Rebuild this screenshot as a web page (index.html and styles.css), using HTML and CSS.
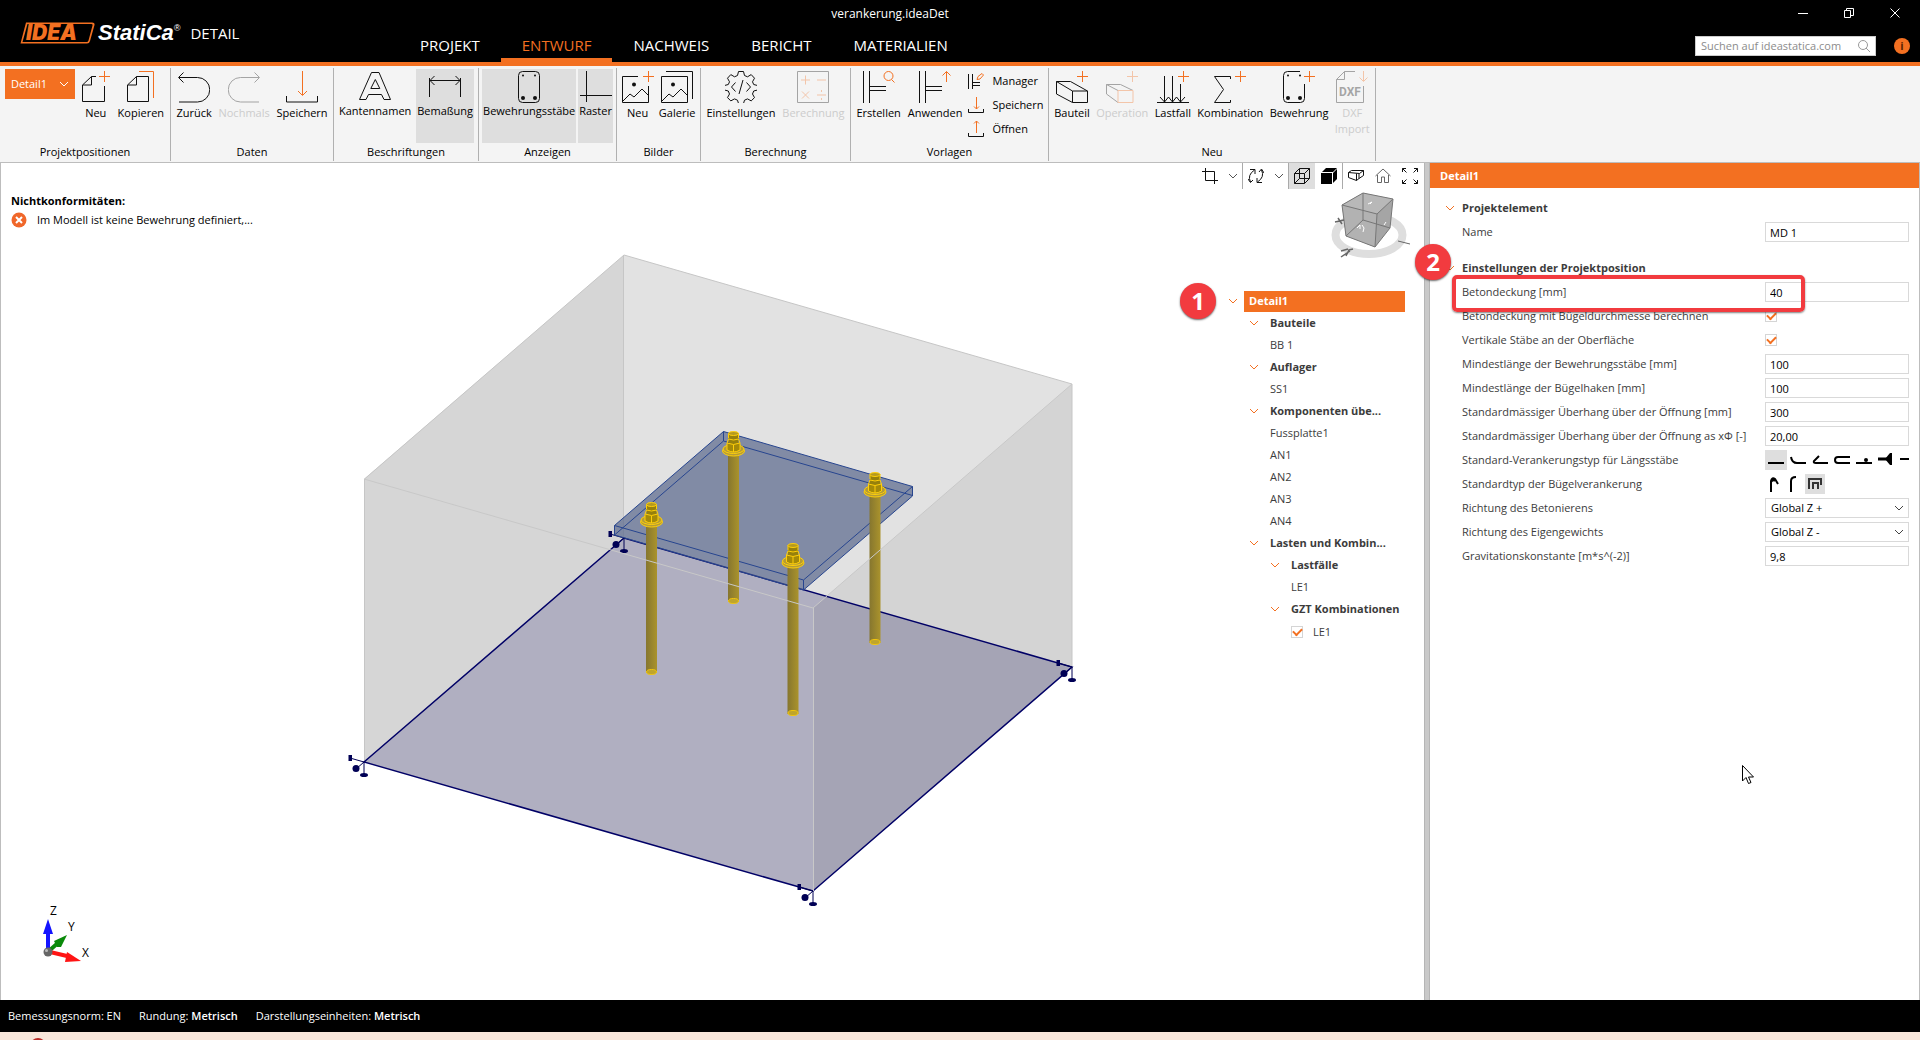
FILE: index.html
```html
<!DOCTYPE html>
<html lang="de">

<head>
    <meta charset="UTF-8" />
    <meta name="viewport" content="width=device-width, initial-scale=1.0" />
    <title>verankerung.ideaDet</title>
    <link rel="stylesheet" href="styles.css">
</head>

<body>

    <!-- shared shapes -->
    <svg class="defs" width="0" height="0" aria-hidden="true">
        <symbol id="chevron" viewBox="0 0 10 6">
            <path d="M1 1l4 4 4-4" fill="none" stroke="currentColor" />
        </symbol>
        <symbol id="plus" viewBox="0 0 11 11">
            <path d="M0 5.5h11M5.5 0v11" fill="none" stroke="#f37021" />
        </symbol>
    </svg>

    <header class="header">
        <div class="titlebar">
            <div class="title">verankerung.ideaDet</div>
            <div class="window-buttons">
                <button type="button" aria-label="Minimieren"><svg width="10" height="10"><path d="M0 5.5h10" /></svg></button>
                <button type="button" aria-label="Wiederherstellen"><svg width="10" height="10"><path d="M.5 2.5h6v7h-6zM2.5 2V.5h7v7H7" /></svg></button>
                <button type="button" aria-label="Schließen"><svg width="10" height="10"><path d="M.5.5l9 9M9.5.5l-9 9" /></svg></button>
            </div>
        </div>

        <div class="brand">
            <svg class="logo" width="75" height="22" viewBox="0 0 75 22" aria-label="IDEA">
                <path d="M6 .5h66q3 0 2.500 2.500L70 19q-.6 2.500-3 2.500H.5z" fill="#f37021" />
                <path d="M7.500 2h64q1.500 0 1 1.500L68.500 18.500q-.5 1.500-2 1.500H2.500z" fill="#000" />
                <text x="6" y="18" class="logo-text">IDEA</text>
            </svg>
            <span class="statica">StatiCa<sup>®</sup></span>
            <span class="product">DETAIL</span>
        </div>

        <nav class="tabs">
            <a href="#projekt">PROJEKT</a>
            <a href="#entwurf" class="active">ENTWURF</a>
            <a href="#nachweis">NACHWEIS</a>
            <a href="#bericht">BERICHT</a>
            <a href="#materialien">MATERIALIEN</a>
        </nav>

        <div class="search-area">
            <label class="search">
                <input type="search" placeholder="Suchen auf ideastatica.com" aria-label="Suchen auf ideastatica.com">
                <svg width="12" height="12" viewBox="0 0 12 12"><circle cx="5" cy="5" r="4.500" /><path d="M8 8l4 4" /></svg>
            </label>
            <button type="button" class="info" aria-label="Info">i</button>
        </div>
    </header>

    <section class="ribbon">
        <div class="group">
            <div class="tools">
                <button type="button" class="dropdown">Detail1 <svg width="10" height="6"><use href="#chevron" /></svg></button>
                <button type="button" class="tool">
                    <svg width="28" height="32"><path d="M14 5.500H9.500l-9 8.500v16.500h22V15M9.500 5.500v8.500h-9" /><use href="#plus" x="17" y="0" width="11" height="11" /></svg>
                    Neu
                </button>
                <button type="button" class="tool">
                    <svg width="28" height="32"><path d="M9.500 5.500h12v25H.5V14zM9.500 5.500v8.500h-9" /><path class="accent" d="M12 .5h14.500V27" /></svg>
                    Kopieren
                </button>
            </div>
            <div class="group-name">Projektpositionen</div>
        </div>

        <div class="group">
            <div class="tools">
                <button type="button" class="tool">
                    <svg width="32" height="32"><path d="M1 6.500h18.500a12 12 0 0 1 0 24.500H1M5.500 1.500l-5 5 5 5" /></svg>
                    Zurück
                </button>
                <button type="button" class="tool" disabled>
                    <svg width="32" height="32"><path d="M31 6.500H12.500a12 12 0 0 0 0 24.500H31M26.500 1.500l5 5-5 5" /></svg>
                    Nochmals
                </button>
                <button type="button" class="tool">
                    <svg width="32" height="32"><path class="accent" d="M16.500 0v24M12 20l4.500 4.500L21 20" /><path d="M.5 25v6h31v-6" /></svg>
                    Speichern
                </button>
            </div>
            <div class="group-name">Daten</div>
        </div>

        <div class="group">
            <div class="tools">
                <button type="button" class="tool toggle" aria-pressed="false">
                    <svg width="32" height="32"><path d="M12.500 1.500h7.500l11.500 27h-6.500l-2.500-5h-13l-2.500 5H.5zM16.300 8.500l-4.500 9h9z" /></svg>
                    Kantennamen
                </button>
                <button type="button" class="tool toggle pressed" aria-pressed="true">
                    <svg width="32" height="32"><path d="M.5 7v19M31.500 7v19M1 9.500h30M5.500 5l-4.500 4.500 4.500 4.500M26.500 5l4.500 4.500-4.500 4.500" /></svg>
                    Bemaßung
                </button>
            </div>
            <div class="group-name">Beschriftungen</div>
        </div>

        <div class="group">
            <div class="tools">
                <button type="button" class="tool toggle pressed" aria-pressed="true">
                    <svg width="22" height="32"><rect x=".5" y=".5" width="21" height="31" rx="4" /><g class="dots"><circle cx="5" cy="4.500" r="1" /><circle cx="17" cy="4.500" r="1" /><circle cx="5" cy="27" r="2" /><circle cx="17" cy="27" r="2" /></g></svg>
                    Bewehrungsstäbe
                </button>
                <button type="button" class="tool toggle pressed" aria-pressed="true">
                    <svg width="32" height="32"><path d="M6.500 0v31M0 24.500h32" /></svg>
                    Raster
                </button>
            </div>
            <div class="group-name">Anzeigen</div>
        </div>

        <div class="group">
            <div class="tools">
                <button type="button" class="tool">
                    <svg width="32" height="32"><path d="M16 5.500H.5v26h26V15M1 30l7-7 4 3 8-8 6 6" /><circle class="dot" cx="12" cy="13.500" r="2" /><use href="#plus" x="21" y="0" width="11" height="11" /></svg>
                    Neu
                </button>
                <button type="button" class="tool">
                    <svg width="32" height="32"><path d="M.5 5.500h26v26H.5zM1 30l7-7 4 3 8-8 6 6M5 .5h26.500V28" /><circle class="dot" cx="12" cy="13.500" r="2" /></svg>
                    Galerie
                </button>
            </div>
            <div class="group-name">Bilder</div>
        </div>

        <div class="group">
            <div class="tools">
                <button type="button" class="tool">
                    <svg width="32" height="32"><path d="M13.500.5h5l1 4 3 1.300 3.700-2.200 3.300 3.600-2 3.600 1.200 2.700 3.800 1v4.500l-3.800 1-1.200 3 2 3.600-3.300 3.300-3.700-2-3 1.300-1 3.300h-5l-1-3.300-3-1.300-3.700 2-3.300-3.300 2-3.600-1.200-3-3.800-1V14.500l3.800-1 1.200-2.700-2-3.600 3.300-3.600 3.700 2.200 3-1.300z" /><path d="M10.500 11.500L6.500 16l4 4.500M21.500 11.500l4 4.500-4 4.500M18 9l-4 14" /></svg>
                    Einstellungen
                </button>
                <button type="button" class="tool" disabled>
                    <svg width="32" height="32"><path d="M.5.500h31v31H.5z" /><path class="accent" d="M4 9h9M8.500 4.500v9M20 9h9M5 20.500l7 7M12 20.500l-7 7M20 24h9M24.500 19v2M24.500 27v2" /></svg>
                    Berechnung
                </button>
            </div>
            <div class="group-name">Berechnung</div>
        </div>

        <div class="group">
            <div class="tools">
                <button type="button" class="tool">
                    <svg width="32" height="32"><path d="M.5 0v32M6.500 0v32M7 15.500h16M7 19.500h16" /><circle class="accent" cx="25.500" cy="5" r="4.500" /><path class="accent" d="M28.500 8.500l3 3" /></svg>
                    Erstellen
                </button>
                <button type="button" class="tool">
                    <svg width="32" height="32"><path d="M.5 0v32M6.500 0v32M7 15.500h16M7 19.500h16" /><path class="accent" d="M27.500 11V.5M23.500 4.500l4-4 4 4" /></svg>
                    Anwenden
                </button>
                <div class="stack">
                    <button type="button"><svg width="16" height="16"><path d="M.5 1v15M4.500 1v15M5 9.500h7M5 12.500h7" /><path class="accent" d="M9 6.500l1-3 4-3 1.500 1.500-3.500 4z" /></svg> Manager</button>
                    <button type="button"><svg width="16" height="16"><path class="accent" d="M8.500 0v12M6 9.500L8.500 12 11 9.500" /><path d="M.5 12v3.500h15V12" /></svg> Speichern</button>
                    <button type="button"><svg width="16" height="16"><path class="accent" d="M8.500 12V0M6 2.500L8.500 0 11 2.500" /><path d="M.5 12v3.500h15V12" /></svg> Öffnen</button>
                </div>
            </div>
            <div class="group-name">Vorlagen</div>
        </div>

        <div class="group">
            <div class="tools">
                <button type="button" class="tool">
                    <svg width="32" height="32"><path d="M.5 10.500h14l17 9.500v11.500h-15L.5 23zM.5 10.500l16 9.500v11.500M16.500 20h15" /><use href="#plus" x="21" y="0" width="11" height="11" /></svg>
                    Bauteil
                </button>
                <button type="button" class="tool" disabled>
                    <svg width="32" height="32"><path d="M.5 13.500h14l12.500 6M.5 13.500l11.500 6M.5 13.500V23l11.500 8.500" /><path class="accent" d="M12 19.500h15v12H12z" /><use href="#plus" x="21" y="0" width="11" height="11" /></svg>
                    Operation
                </button>
                <button type="button" class="tool">
                    <svg width="32" height="32"><path d="M0 31.500h32M7.500 5v26M15.500 5v26M23.500 13v18M3 26l4.500 5 4-5 4 5 4-5 4 5 4.500-5" /><use href="#plus" x="21" y="0" width="11" height="11" /></svg>
                    Lastfall
                </button>
                <button type="button" class="tool">
                    <svg width="32" height="32"><path d="M16.500 8V5.500h-16l9 13-9 13h16V29" /><use href="#plus" x="21" y="0" width="11" height="11" /></svg>
                    Kombination
                </button>
                <button type="button" class="tool">
                    <svg width="32" height="32"><path d="M17 .5H4.500q-4 0-4 4v23q0 4 4 4h13q4 0 4-4V13" /><g class="dots"><circle cx="5" cy="4.500" r="1" /><circle cx="17" cy="4.500" r="1" /><circle cx="5" cy="27" r="2" /><circle cx="17" cy="27" r="2" /></g><use href="#plus" x="21" y="0" width="11" height="11" /></svg>
                    Bewehrung
                </button>
                <button type="button" class="tool" disabled>
                    <svg width="32" height="32"><path d="M19 .5H8.500l-8 8v23H27.500V15M8.500.5v8h-8" /><path class="accent" d="M27.500 0v10M23.500 6.500l4 4 4-4" /><text x="3" y="25" class="dxf">DXF</text></svg>
                    <span>DXF<br>Import</span>
                </button>
            </div>
            <div class="group-name">Neu</div>
        </div>
    </section>

    <main class="workspace">
        <section class="viewport">
            <!-- 3D model -->
            <svg class="scene" viewBox="1 163 1423 837" preserveAspectRatio="xMinYMin meet" aria-label="3D-Modell">
                <defs>
                    <linearGradient id="rod"><stop offset="0" stop-color="#86762f" /><stop offset="1" stop-color="#aa932c" /></linearGradient>
                    <g id="bolt">
                        <rect x="-5.500" y="24" width="11" height="147" fill="url(#rod)" />
                        <ellipse cx="0" cy="170" rx="5" ry="2.500" fill="#bfa52c" stroke="#f3c60c" />
                        <ellipse cx="0" cy="20" rx="11" ry="5" fill="#b59c35" stroke="#ffcf0a" />
                        <ellipse cx="0" cy="18" rx="10.500" ry="4.500" fill="#b59c35" stroke="#ffcf0a" />
                        <path d="M-6.500 12v7q6.500 4 13 0v-7" fill="#a58a08" stroke="#ffcf0a" />
                        <path d="M-5 2v11h10V2z" fill="#96800c" stroke="none" />
                        <path d="M-5 2v5M5 2v5M-6.500 12l1.500-4q5 2 10 0l1.500 4q-6.500 3-13 0M0 14v7" fill="none" stroke="#ffcf0a" />
                        <ellipse cx="0" cy="2.500" rx="5" ry="2" fill="#b59a20" stroke="#ffcf0a" />
                    </g>
                    <g id="support" stroke="#000055" fill="#000055">
                        <path d="M0 0l-14-4M0 0l-8 7M0 0v13" fill="none" />
                        <rect x="-15.500" y="-7" width="3.500" height="6" stroke="none" />
                        <circle cx="-8" cy="6.500" r="3.500" stroke="none" />
                        <ellipse cx="0" cy="13" rx="4" ry="2" stroke="none" />
                    </g>
                </defs>
                <path d="M364 479L624 255v283L364 762z" fill="#d6d6d6" />
                <path d="M624 255l448 129v283L624 538z" fill="#e2e2e2" />
                <path d="M364 762L624 538l448 129L813 891z" fill="#b0afc1" />
                <path d="M813 608l259-224v283L813 891z" fill="#000" fill-opacity=".06" />
                <g fill="none" stroke="#c6c6c6">
                    <path d="M364.500 762V479L624 255l448 129v283M623.500 255v283" />
                </g>
                <path d="M364 762L624 538l448 129L813 891z" fill="none" stroke="#000066" stroke-width="1.500" />
                <use href="#support" x="624" y="538" />
                <g fill="#59668c" fill-opacity=".7" stroke="#27458f">
                    <path d="M614.500 525.500l109-94 189 55v9.500L803.500 590l-189-55z" />
                    <path d="M614.500 525.500l189 54.500 109-93.500M803.500 580v10M614.500 535l109-94 189 54.500M723.500 431.500v9.500" fill="none" />
                </g>
                <use href="#bolt" x="733.500" y="431" />
                <use href="#bolt" x="875" y="472" />
                <use href="#bolt" x="651.500" y="502" />
                <use href="#bolt" x="793" y="543" />
                <path d="M364 479l449 129 259-224M813.500 608v283" fill="none" stroke="#c8c8c8" />
                <use href="#support" x="364" y="762" />
                <use href="#support" x="813" y="891" />
                <use href="#support" x="1072" y="667" />
                <!-- axes -->
                <path d="M48 952v-20" stroke="#1414ff" stroke-width="4" />
                <path d="M43 934l5-15 5 15z" fill="#1414ff" />
                <path d="M50 950l9-8" stroke="#0a8a0a" stroke-width="4" />
                <path d="M54 941l13-6-6 12-4 0z" fill="#0a8a0a" />
                <path d="M50 952l17 4" stroke="#ff1414" stroke-width="4" />
                <path d="M67 952l14 9-16 1z" fill="#ff1414" />
                <circle cx="48" cy="952" r="4.500" fill="#666" />
                <circle cx="46.500" cy="950.500" r="1.500" fill="#bbb" />
                <g class="axis-name"><text x="50" y="915">Z</text><text x="68" y="931">Y</text><text x="82" y="957">X</text></g>
            </svg>

            <div class="messages">
                <b>Nichtkonformitäten:</b>
                <div class="message">
                    <svg width="16" height="16"><circle cx="8" cy="8" r="7.500" fill="#f0672a" /><path d="M5 5l6 6M11 5l-6 6" stroke="#fff" stroke-width="2" /></svg>
                    Im Modell ist keine Bewehrung definiert,...
                </div>
            </div>

            <div class="side">
                <div class="view-tools">
                    <button type="button" aria-label="Ausschnitt"><svg width="16" height="16"><path d="M3.500 0v12.500H16M0 3.500h12.500V16" /></svg></button>
                    <button type="button" class="more" aria-label="Mehr"><svg width="10" height="6"><use href="#chevron" /></svg></button>
                    <button type="button" class="line-left" aria-label="Drehen"><svg width="16" height="16"><path d="M2.500 14Q-1 7 6.500 2M2 1.500h5V6M13.500 2Q17 9 9.500 14M14 14.500H9V10M0 11l2.500 3.500L5 12M11 4l2.500-3L16 5" /></svg></button>
                    <button type="button" class="more" aria-label="Mehr"><svg width="10" height="6"><use href="#chevron" /></svg></button>
                    <button type="button" class="line-left pressed" aria-pressed="true" aria-label="Drahtmodell"><svg width="16" height="16"><path d="M.5 5.500h10v10H.5zM.5 5.500l5-5h10l-5 5M15.500.5v10l-5 5M5.500.5v10h10M.5 15.500l5-5" /></svg></button>
                    <button type="button" aria-label="Vollmodell"><svg width="16" height="16"><path d="M0 5h11v11H0zM1 4l4-4h11l-4 4zM12 5l4-4v10l-4 4z" fill="#000" stroke="none" /></svg></button>
                    <button type="button" class="line-left" aria-label="Schnitt"><svg width="16" height="16"><path d="M.5 4.500l3-2h12l-4 3-11-1v5l8 3v-7M8.500 12.500l2.500-2V5.500M15.500 2.500v5l-4.500 3" /></svg></button>
                    <button type="button" aria-label="Startansicht"><svg width="16" height="16" class="grey"><path d="M.5 8L8 1l7.500 7M2.500 7v7.500h4V9h3v5.500h4V7" /></svg></button>
                    <button type="button" aria-label="Vollbild"><svg width="16" height="16"><path d="M.5 4V.5H4M12 .5h3.500V4M15.500 12v3.500H12M4 15.500H.5V12M.5.5l4 4M15.500.5l-4 4M15.500 15.500l-4-4M.5 15.500l4-4" /></svg></button>
                </div>

                <svg class="cube" width="84" height="70" viewBox="1328 190 84 70" aria-label="Ansichtswürfel">
                    <ellipse cx="1369" cy="235" rx="33.500" ry="19" fill="none" stroke="#dedede" stroke-width="8" />
                    <path d="M1342 205l21-12 30 6-3 29-15 19-29-11z" fill="#a5a5a5" />
                    <path d="M1342 205l35 9-2 33-29-11z" fill="#b2b2b2" />
                    <path d="M1363 193l30 6-16 15-35-9z" fill="#b8b8b8" />
                    <path d="M1342 205l21-12 30 6-3 29-15 19-29-11zM1342 205l35 9 16-15M1377 214l-2 33M1363 193v27M1363 220l-17 16M1363 220l27 8" fill="none" stroke="#777" />
                    <path d="M1335 222l9-2M1338 218l4 6M1341 251l7-2M1346 256l3-6 4-1M1341 257l9-6" stroke="#666" stroke-width="1.500" fill="none" />
                    <path d="M1398 241l12 3" stroke="#666" fill="none" />
                    <path d="M1357 228l3-3v4M1362 225l2 3-1 4M1368 204l4-2-2 2M1384 225l2-3" stroke="#fff" fill="none" />
                </svg>

                <ul class="tree">
                    <li class="root"><svg width="10" height="6"><use href="#chevron" /></svg><b>Detail1</b></li>
                    <li><svg width="10" height="6"><use href="#chevron" /></svg><b>Bauteile</b></li>
                    <li><span>BB 1</span></li>
                    <li><svg width="10" height="6"><use href="#chevron" /></svg><b>Auflager</b></li>
                    <li><span>SS1</span></li>
                    <li><svg width="10" height="6"><use href="#chevron" /></svg><b>Komponenten übe...</b></li>
                    <li><span>Fussplatte1</span></li>
                    <li><span>AN1</span></li>
                    <li><span>AN2</span></li>
                    <li><span>AN3</span></li>
                    <li><span>AN4</span></li>
                    <li><svg width="10" height="6"><use href="#chevron" /></svg><b>Lasten und Kombin...</b></li>
                    <li class="sub"><svg width="10" height="6"><use href="#chevron" /></svg><b>Lastfälle</b></li>
                    <li class="sub"><span>LE1</span></li>
                    <li class="sub"><svg width="10" height="6"><use href="#chevron" /></svg><b>GZT Kombinationen</b></li>
                    <li class="sub check"><label><input type="checkbox" checked> LE1</label></li>
                </ul>
                <div class="step step-one">1</div>
            </div>
        </section>

        <div class="splitter"></div>

        <aside class="panel">
            <h2>Detail1</h2>
            <form>
                <h3><svg width="10" height="6"><use href="#chevron" /></svg>Projektelement</h3>
                <div class="row"><label for="name">Name</label><input type="text" id="name" value="MD 1"></div>

                <h3 class="second"><svg width="10" height="6"><use href="#chevron" /></svg>Einstellungen der Projektposition</h3>
                <div class="row marked"><label for="deckung">Betondeckung [mm]</label><input type="text" id="deckung" value="40">
                    <div class="frame"></div>
                    <div class="step step-two">2</div>
                </div>
                <div class="row"><label for="buegel">Betondeckung mit Bügeldurchmesse berechnen</label><input type="checkbox" id="buegel" checked></div>
                <div class="row"><label for="vertikal">Vertikale Stäbe an der Oberfläche</label><input type="checkbox" id="vertikal" checked></div>
                <div class="row"><label for="stab">Mindestlänge der Bewehrungsstäbe [mm]</label><input type="text" id="stab" value="100"></div>
                <div class="row"><label for="haken">Mindestlänge der Bügelhaken [mm]</label><input type="text" id="haken" value="100"></div>
                <div class="row"><label for="ueber">Standardmässiger Überhang über der Öffnung [mm]</label><input type="text" id="ueber" value="300"></div>
                <div class="row"><label for="ueberphi">Standardmässiger Überhang über der Öffnung as xΦ [-]</label><input type="text" id="ueberphi" value="20,00"></div>
                <div class="row">
                    <span id="anker">Standard-Verankerungstyp für Längsstäbe</span>
                    <div class="choices" role="group" aria-labelledby="anker">
                        <button type="button" class="pressed" aria-label="Gerade"><svg width="16" height="16"><path d="M0 11h16" /></svg></button>
                        <button type="button" aria-label="Bogen"><svg width="16" height="16"><path d="M1 5q1 6 6 6h9" /></svg></button>
                        <button type="button" aria-label="Haken"><svg width="16" height="16"><path d="M7 4l-5 5q-1 2 2 2h12" /></svg></button>
                        <button type="button" aria-label="Schlaufe"><svg width="16" height="16"><path d="M16 5H4q-3 0-3 3t3 3h12" /></svg></button>
                        <button type="button" aria-label="Querstab"><svg width="16" height="16"><path d="M0 11h16" /><circle cx="10" cy="8" r="2" fill="#000" stroke="none" /></svg></button>
                        <button type="button" aria-label="Ankerkopf"><svg width="16" height="16"><path d="M0 7h9" stroke-width="3" /><path d="M7 7l5-6h2v12h-2z" fill="#000" stroke="none" /></svg></button>
                        <button type="button" aria-label="Ohne"><svg width="16" height="16"><path d="M0 7h16" /></svg></button>
                    </div>
                </div>
                <div class="row">
                    <span id="verank">Standardtyp der Bügelverankerung</span>
                    <div class="choices small" role="group" aria-labelledby="verank">
                        <button type="button" aria-label="Haken 135"><svg width="16" height="16"><path d="M4 16V5q1-4 4-2l3 5M4 6q2-3 4-1" /></svg></button>
                        <button type="button" aria-label="Haken 90"><svg width="16" height="16"><path d="M4 16V5q0-4 5-4" /></svg></button>
                        <button type="button" class="pressed" aria-label="Geschlossen"><svg width="16" height="16" class="thin"><path d="M2 13V3h12v6M6 13V7h5v6" /></svg></button>
                    </div>
                </div>
                <div class="row"><label for="beton">Richtung des Betonierens</label>
                    <div class="select"><select id="beton"><option>Global Z +</option><option>Global Z -</option></select><svg width="10" height="6"><use href="#chevron" /></svg></div>
                </div>
                <div class="row"><label for="eigen">Richtung des Eigengewichts</label>
                    <div class="select"><select id="eigen"><option>Global Z -</option><option>Global Z +</option></select><svg width="10" height="6"><use href="#chevron" /></svg></div>
                </div>
                <div class="row"><label for="grav">Gravitationskonstante [m*s^(-2)]</label><input type="text" id="grav" value="9,8"></div>
            </form>
        </aside>
    </main>

    <footer class="status">
        <span>Bemessungsnorm: EN</span>
        <span>Rundung: <b>Metrisch</b></span>
        <span>Darstellungseinheiten: <b>Metrisch</b></span>
    </footer>
    <div class="strip"><i></i></div>

    <svg class="pointer" width="12" height="19" viewBox="0 0 12 19" aria-hidden="true">
        <path d="M.5.5v15.500l3.500-3.500 2.500 6 2.500-1-2.500-5.500h5z" fill="#fff" stroke="#000" />
    </svg>

</body>

</html>
```
FILE: styles.css
```css
* {
    box-sizing: border-box;
}

body {
    margin: 0;
    height: 100vh;
    display: flex;
    flex-direction: column;
    overflow: hidden;
    font-family: "Open Sans", "Noto Sans", sans-serif;
    font-size: 11px;
    line-height: 16px;
    color: #000;
    background: #f4f4f4;
}

button,
input,
select {
    font: inherit;
    color: inherit;
}

button {
    padding: 0;
    border: 0;
    background: none;
}

svg {
    flex: none;
    fill: none;
}

.defs {
    position: absolute;
}

/* header */

.header {
    display: grid;
    grid-template-columns: 399px auto 1fr;
    grid-template-rows: 28px 34px;
    background: #000;
    color: #fff;
    border-bottom: 4px solid #f37021;
}

.titlebar {
    grid-area: 1 / 1 / 2 / 4;
    display: flex;
    align-items: center;
}

.title {
    flex: 1;
    text-align: center;
    font-size: 12px;
}

.window-buttons {
    display: flex;
    width: 140px;
}

.window-buttons button {
    width: 46px;
    height: 28px;
}

.window-buttons svg {
    stroke: #fff;
}

.brand {
    grid-area: 1 / 1 / 3 / 2;
    display: flex;
    align-items: center;
    padding: 4px 0 0 20px;
}

.logo {
    overflow: visible;
}

.logo-text {
    font: italic 900 21px "Inter", sans-serif;
    fill: #f37021;
}

.statica {
    margin-left: 3px;
    font: italic bold 22px "Liberation Sans", sans-serif;
}

.statica sup {
    font-size: 9px;
    font-weight: normal;
    vertical-align: 9px;
}

.product {
    margin-left: 10px;
    font-size: 15px;
}

.tabs {
    grid-area: 2 / 2;
    display: flex;
}

.tabs a {
    padding: 7px 21px 0;
    font-size: 15px;
    line-height: 20px;
    color: #fff;
    text-decoration: none;
    border-bottom: 4px solid transparent;
}

.tabs .active {
    color: #f37021;
    border-color: #f37021;
}

.search-area {
    grid-area: 2 / 3;
    display: flex;
    justify-content: flex-end;
    align-items: center;
    gap: 18px;
    padding: 2px 10px 0 0;
}

.search {
    display: flex;
    align-items: center;
    width: 181px;
    height: 20px;
    padding: 0 5px;
    background: #fff;
    border: 1px solid #ccc;
}

.search input {
    flex: 1;
    min-width: 0;
    padding: 0;
    border: 0;
    background: none;
    color: #000;
}

.search input::placeholder {
    color: #8c8c8c;
}

.search svg {
    stroke: #999;
}

.info {
    width: 16px;
    height: 16px;
    border-radius: 50%;
    background: #f37021;
    color: #5a2200;
    font-weight: bold;
    line-height: 16px;
}

/* ribbon */

.ribbon {
    display: grid;
    grid-template-columns: 171px 163px 145px 138px 84px 150px 198px 327px;
    padding: 2px 0 1px;
    border-bottom: 1px solid #bdbdbd;
}

.group {
    display: flex;
    flex-direction: column;
    height: 93px;
    padding: 1px 2px 0;
    border-right: 1px solid #b0b0b0;
}

.tools {
    height: 74px;
    display: flex;
    justify-content: space-around;
}

.group-name {
    line-height: 18px;
    text-align: center;
}

.tool {
    display: flex;
    flex-direction: column;
    align-items: center;
    gap: 2px;
    padding: 2px 1px 0;
    white-space: nowrap;
}

.toggle {
    gap: 0;
}

.tool svg,
.stack svg {
    stroke: #111;
}

.tool .accent,
.stack .accent {
    stroke: #f37021;
}

.tool .dots,
.tool .dot {
    fill: #111;
    stroke: none;
}

.tool:disabled {
    color: #ccc;
}

.tool:disabled svg {
    opacity: .35;
}

.dxf {
    font: bold 12px "Roboto", sans-serif;
    fill: #111;
    stroke: none;
}

.pressed {
    background: #dedede;
}

.dropdown {
    display: flex;
    align-items: center;
    justify-content: space-between;
    width: 70px;
    height: 30px;
    padding: 0 6px;
    background: #f37021;
    color: #fff;
}

.stack {
    display: flex;
    flex-direction: column;
}

.stack button {
    display: flex;
    align-items: center;
    gap: 8px;
    height: 24px;
}

/* workspace */

.workspace {
    flex: 1;
    min-height: 0;
    display: flex;
    background: #fff;
}

.viewport {
    flex: 1;
    position: relative;
    display: flex;
    justify-content: space-between;
    border-left: 1px solid #bdbdbd;
}

.scene {
    position: absolute;
    inset: 0;
    width: 100%;
    height: 100%;
}

.axis-name {
    font-size: 12px;
    fill: #000;
}

.messages {
    position: relative;
    padding: 30px 0 0 10px;
}

.message {
    display: flex;
    align-items: center;
    gap: 10px;
    margin-top: 3px;
}

.side {
    position: relative;
    width: 228px;
    display: flex;
    flex-direction: column;
}

.view-tools {
    display: flex;
    justify-content: flex-end;
    padding-right: 1px;
}

.view-tools button {
    display: flex;
    align-items: center;
    justify-content: center;
    width: 27px;
    height: 26px;
}

.view-tools svg {
    stroke: #111;
}

.view-tools .grey {
    stroke: #666;
}

.view-tools .more {
    width: 19px;
    color: #555;
}

.view-tools .more svg {
    stroke: none;
}

.view-tools .line-left {
    border-left: 1px solid #aaa;
}

.cube {
    align-self: flex-end;
    margin: 1px 12px 0 0;
}

.tree {
    list-style: none;
    margin: 30px 19px 0 0;
    padding: 0;
    color: #3c3c3c;
}

.tree li {
    display: flex;
    align-items: center;
    height: 22px;
    padding-left: 53px;
    white-space: nowrap;
}

.tree li > span,
.tree li > label {
    padding-left: 21px;
}

.tree svg {
    margin-right: 11px;
    color: #f37021;
}

.tree .sub {
    padding-left: 74px;
}

.tree .check {
    height: 24px;
}

.tree .root {
    padding-left: 32px;
}

.tree .root svg {
    margin-right: 6px;
}

.tree .root b {
    flex: 1;
    padding: 2px 5px 3px;
    background: #f37021;
    color: #fff;
}

.tree label {
    display: flex;
    align-items: center;
    gap: 10px;
}

input[type="checkbox"] {
    appearance: none;
    display: grid;
    place-items: center;
    width: 12px;
    height: 12px;
    margin: 0;
    border: 1px solid #d5d5d5;
    background: #fff;
}

input[type="checkbox"]:checked::after {
    content: "";
    width: 7px;
    height: 4px;
    margin-bottom: 3px;
    border: solid #f37021;
    border-width: 0 0 2px 2px;
    transform: rotate(-45deg);
}

/* numbered hints */

.step {
    position: absolute;
    width: 36px;
    height: 36px;
    border-radius: 50%;
    background: #f23b3f;
    color: #fff;
    box-shadow: 0 1px 2px rgba(0, 0, 0, .6);
    font: bold 24px/36px "Open Sans", sans-serif;
    text-align: center;
}

.step-one {
    left: -16px;
    top: 120px;
}

.step-two {
    left: -47px;
    top: -36px;
}

.frame {
    position: absolute;
    inset: -5px 104px -8px -10px;
    border: 4px solid #f23b3f;
    border-radius: 5px;
    box-shadow: 0 1px 2px rgba(0, 0, 0, .5);
}

/* properties */

.splitter {
    width: 6px;
    background: #c9c9c9;
    border: solid #b5b5b5;
    border-width: 0 1px;
}

.panel {
    width: 490px;
    border-right: 1px solid #bdbdbd;
}

.panel h2 {
    margin: 0;
    padding-left: 10px;
    font-size: 11px;
    line-height: 25px;
    color: #fff;
    background: #f37021;
}

.panel form {
    padding: 8px 10px 0 32px;
    color: #3c3c3c;
}

.panel h3 {
    display: flex;
    align-items: center;
    gap: 7px;
    margin: 0 0 0 -17px;
    font-size: 11px;
    line-height: 24px;
}

.panel h3 svg {
    color: #f37021;
}

.panel .second {
    margin-top: 12px;
}

.row {
    display: grid;
    grid-template-columns: 1fr 144px;
    align-items: center;
    height: 24px;
    white-space: nowrap;
}

.marked {
    position: relative;
    z-index: 1;
}

.row input[type="text"],
.select {
    width: 144px;
    height: 20px;
    border: 1px solid #d9d9d9;
    background: #fff;
    color: #000;
}

.row input[type="text"] {
    padding: 0 4px;
}

.select {
    display: flex;
    align-items: center;
    padding-right: 4px;
}

.select select {
    flex: 1;
    appearance: none;
    padding: 0 5px;
    border: 0;
    background: none;
}

.select svg {
    color: #444;
}

.choices {
    display: flex;
    overflow: hidden;
}

.choices button {
    flex: none;
    width: 22px;
    height: 20px;
}

.small button {
    width: 20px;
}

.choices svg {
    display: block;
    margin: 0 auto;
    stroke: #000;
    stroke-width: 2;
}

.choices .thin {
    stroke: #333;
}

/* bottom */

.status {
    display: flex;
    gap: 18px;
    height: 32px;
    padding-left: 8px;
    line-height: 32px;
    background: #000;
    color: #fff;
}

.status b {
    font-weight: 600;
}

.strip {
    height: 8px;
    overflow: hidden;
    background: #f8e6da;
}

.strip i {
    display: block;
    width: 16px;
    height: 16px;
    margin: 6px 0 0 30px;
    border-radius: 50%;
    background: #b92b27;
}

.pointer {
    position: absolute;
    left: 1742px;
    top: 765px;
}
```
